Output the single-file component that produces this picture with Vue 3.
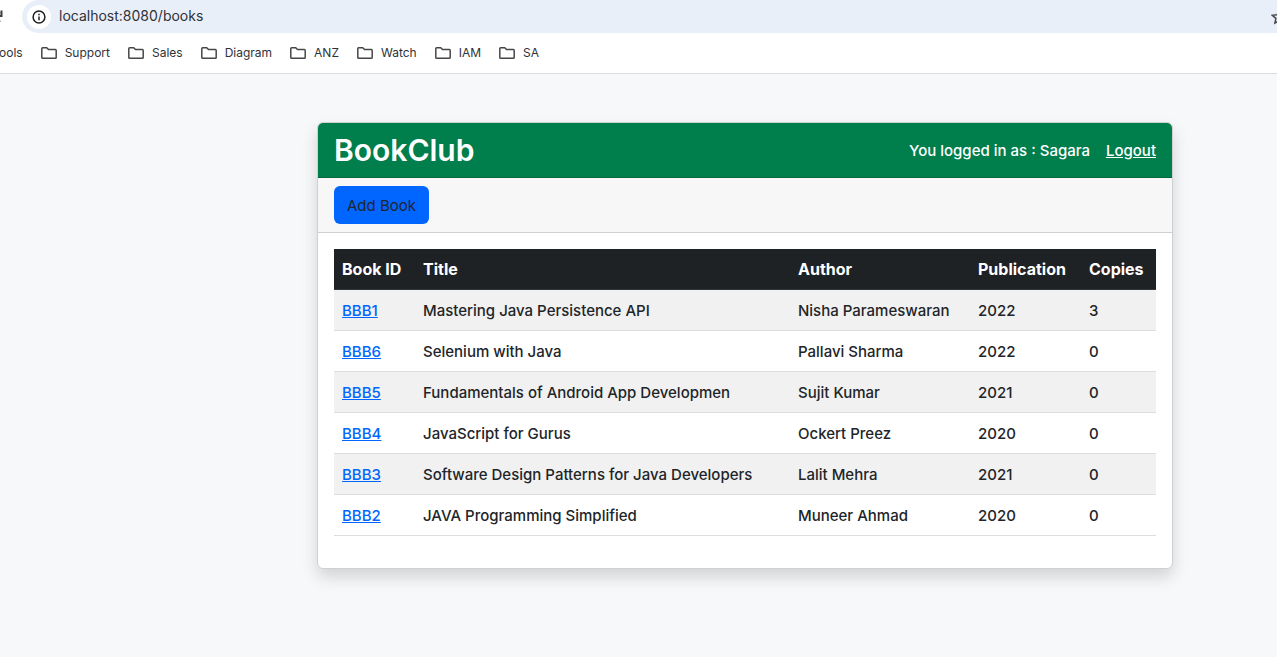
<script setup>
const folders = ['Support', 'Sales', 'Diagram', 'ANZ', 'Watch', 'IAM', 'SA']

const books = [
  { id: 'BBB1', title: 'Mastering Java Persistence API', author: 'Nisha Parameswaran', year: 2022, copies: 3 },
  { id: 'BBB6', title: 'Selenium with Java', author: 'Pallavi Sharma', year: 2022, copies: 0 },
  { id: 'BBB5', title: 'Fundamentals of Android App Developmen', author: 'Sujit Kumar', year: 2021, copies: 0 },
  { id: 'BBB4', title: 'JavaScript for Gurus', author: 'Ockert Preez', year: 2020, copies: 0 },
  { id: 'BBB3', title: 'Software Design Patterns for Java Developers', author: 'Lalit Mehra', year: 2021, copies: 0 },
  { id: 'BBB2', title: 'JAVA Programming Simplified', author: 'Muneer Ahmad', year: 2020, copies: 0 },
]
</script>

<template>
  <div class="window">
    <header class="chrome">
      <div class="toolbar">
        <button class="reload" type="button" aria-label="Reload">
          <svg width="16" height="16" viewBox="0 0 16 16" fill="none" stroke="#3c4043" stroke-width="2">
            <path d="M13 11.5A6 6 0 1 1 13 4.5" />
            <path d="M14.5 1.5V7H9.5" />
          </svg>
        </button>
        <div class="address">
          <button class="site-info" type="button" aria-label="View site information">
            <svg width="14" height="14" viewBox="0 0 14 14" fill="none" stroke="#1f1f1f">
              <circle cx="7" cy="7" r="5.9" stroke-width="1.5" />
              <path d="M7 6.4V10.2" stroke-width="1.5" />
              <path d="M7 3.7V5.2" stroke-width="1.5" />
            </svg>
          </button>
          <input class="url" type="text" value="localhost:8080/books" aria-label="Address" />
          <button class="star" type="button" aria-label="Bookmark this page">
            <svg width="16" height="16" viewBox="0 0 16 16" fill="none" stroke="#474747" stroke-width="1.5">
              <path d="M8 1.6l1.9 4.2 4.8.5-3.6 3.1 1 4.6L8 11.6 3.9 14l1-4.6L1.3 6.3l4.8-.5z" />
            </svg>
          </button>
        </div>
      </div>
      <nav class="bookmarks" aria-label="Bookmarks">
        <button class="bookmark" type="button">ools</button>
        <button v-for="name in folders" :key="name" class="bookmark" type="button">
          <svg width="16" height="12" viewBox="0 0 16 12" fill="none" stroke="#474747" stroke-width="1.5">
            <path d="M.8 10.4V1.6Q.8.8 1.6.8H5.7L7.5 2.6H14.4Q15.2 2.6 15.2 3.4V10.4Q15.2 11.2 14.4 11.2H1.6Q.8 11.2.8 10.4z" />
          </svg>
          {{ name }}
        </button>
      </nav>
    </header>

    <main class="page">
      <section class="card">
        <div class="card-header">
          <h1>BookClub</h1>
          <div class="session">
            <span>You logged in as : Sagara</span>
            <a href="#logout">Logout</a>
          </div>
        </div>
        <div class="actions">
          <button class="add" type="button">Add Book</button>
        </div>
        <div class="card-body">
          <table>
            <colgroup>
              <col class="col-id" />
              <col />
              <col class="col-author" />
              <col class="col-year" />
              <col class="col-copies" />
            </colgroup>
            <thead>
              <tr>
                <th scope="col">Book ID</th>
                <th scope="col">Title</th>
                <th scope="col">Author</th>
                <th scope="col">Publication</th>
                <th scope="col">Copies</th>
              </tr>
            </thead>
            <tbody>
              <tr v-for="book in books" :key="book.id">
                <td><a :href="'#' + book.id">{{ book.id }}</a></td>
                <td>{{ book.title }}</td>
                <td>{{ book.author }}</td>
                <td>{{ book.year }}</td>
                <td>{{ book.copies }}</td>
              </tr>
            </tbody>
          </table>
        </div>
      </section>
    </main>
  </div>
</template>

<style>
body {
  background: #f7f8fa;
}
</style>

<style scoped>
.window {
  overflow: hidden;
  min-height: 100vh;
  color: #212529;
  font-family: Inter, "Liberation Sans", sans-serif;
  font-size: 15px;
  line-height: 24px;
}

.window * {
  box-sizing: border-box;
}

button,
input {
  margin: 0;
  padding: 0;
  border: 0;
  background: none;
  color: inherit;
  font: inherit;
}

.chrome {
  background: #fff;
  border-bottom: 1px solid #dcdddf;
}

.toolbar {
  display: flex;
  height: 33px;
  margin-right: -12px;
}

.reload {
  display: flex;
  align-items: center;
  width: 16px;
  margin-left: -13px;
  margin-right: 19px;
}

.address {
  display: flex;
  flex: 1;
  align-items: center;
  background: #e9eff9;
  border-radius: 17px 0 0 17px;
  padding-left: 5px;
}

.site-info {
  display: flex;
  align-items: center;
  justify-content: center;
  width: 24px;
  height: 24px;
  border-radius: 50%;
  background: #fff;
}

.url {
  flex: 1;
  margin-left: 8px;
  padding-bottom: 2px;
  color: #303236;
  font-size: 14px;
  line-height: 20px;
}

.star {
  display: flex;
  width: 18px;
}

.bookmarks {
  display: flex;
  align-items: center;
  gap: 18px;
  height: 40px;
  margin-left: -1px;
  color: #303236;
  font-size: 12px;
  line-height: 16px;
}

.bookmark {
  display: flex;
  align-items: center;
  gap: 8px;
}

.page {
  padding: 48px 104px 48px 317px;
}

.card {
  overflow: hidden;
  background: #fff;
  border: 1px solid #cfd0d1;
  border-radius: 6px;
  box-shadow: 0 8px 16px rgba(0, 0, 0, 0.15);
}

.card-header {
  display: flex;
  align-items: center;
  justify-content: space-between;
  padding: 8px 16px;
  background: #007e4c;
  border-bottom: 1px solid #00683f;
  color: #fff;
}

h1 {
  margin: 0;
  font-size: 30px;
  font-weight: 560;
  line-height: 38px;
}

.session {
  display: flex;
  gap: 16px;
  padding-top: 2px;
  font-weight: 500;
}

.session a {
  color: inherit;
}

.actions {
  padding: 8px 16px;
  background: #f7f7f7;
  border-bottom: 1px solid #cfd0d1;
}

.add {
  display: block;
  height: 38px;
  padding: 2px 13px 0;
  border-radius: 6px;
  background: #0066ff;
}

.card-body {
  padding: 16px 16px 32px;
}

table {
  width: 100%;
  table-layout: fixed;
  border-collapse: separate;
  border-spacing: 0;
}

.col-id {
  width: 81px;
}

.col-author {
  width: 180px;
}

.col-year {
  width: 111px;
}

.col-copies {
  width: 75px;
}

th,
td {
  padding: 9px 8px 7px;
  border-bottom: 1px solid #dbdee1;
  text-align: left;
  white-space: nowrap;
}

td {
  font-weight: 450;
}

th {
  padding: 8px;
  background: #1f2225;
  border-color: #34373a;
  color: #fff;
  font-size: 16px;
  font-weight: 700;
}

tbody tr:nth-child(odd) {
  background: #f1f1f1;
}

td a {
  color: #0066ff;
}
</style>
